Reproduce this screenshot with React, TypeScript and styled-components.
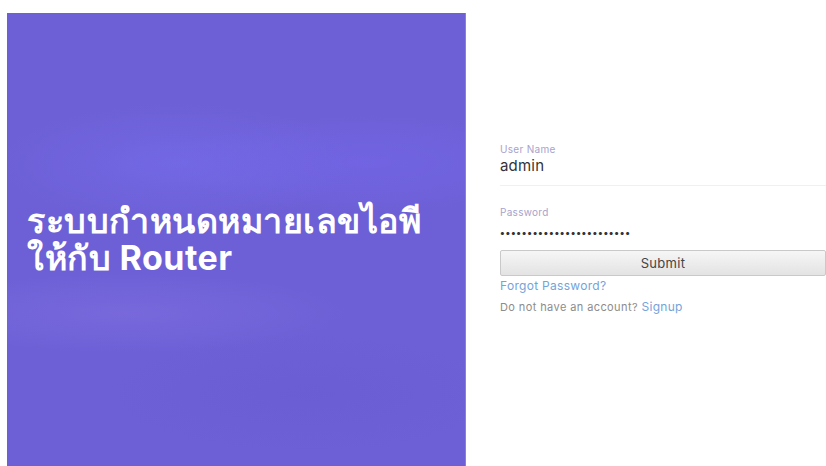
import React from 'react';
import styled, { createGlobalStyle } from 'styled-components';

const GlobalStyle = createGlobalStyle`
  html, body {
    margin: 0;
    padding: 0;
    background: #ffffff;
  }
  body {
    font-family: 'Inter', 'Noto Sans', 'DejaVu Sans', sans-serif;
  }
`;

const Page = styled.div`
  display: flex;
  width: 826px;
  height: 466px;
  padding: 13px 0 0 7px;
  box-sizing: border-box;
  overflow: hidden;
`;

const Hero = styled.section`
  flex: 0 0 459px;
  height: 453px;
  display: flex;
  align-items: center;
  padding-left: 20px;
  box-sizing: border-box;
  background:
    radial-gradient(ellipse 180px 60px at 170px 150px, rgba(120, 110, 240, 0.55), transparent),
    radial-gradient(ellipse 200px 50px at 360px 150px, rgba(118, 104, 238, 0.5), transparent),
    radial-gradient(ellipse 220px 40px at 120px 300px, rgba(130, 112, 226, 0.5), transparent),
    radial-gradient(ellipse 200px 60px at 300px 380px, rgba(104, 90, 208, 0.5), transparent),
    #6d60d6;
  border-right: 1px solid #8a80d8;
`;

const HeroTitle = styled.h1`
  margin: 0 0 2px;
  color: #ffffff;
  font-family: 'Inter', 'Noto Sans', sans-serif;
  font-size: 34px;
  font-weight: 700;
  line-height: 37px;
  letter-spacing: 0.5px;
`;

const FormSide = styled.section`
  flex: 1;
  display: flex;
  flex-direction: column;
  padding: 129px 0 0 34px;
  box-sizing: border-box;
`;

const Field = styled.div<{ $gap?: number }>`
  display: flex;
  flex-direction: column;
  border-bottom: 1px solid #f0f0f2;
  padding-bottom: 9px;
  margin-bottom: ${({ $gap }) => $gap ?? 19}px;
`;

const Label = styled.label`
  font-size: 10px;
  color: #a8a2cc;
  line-height: 14px;
  letter-spacing: 0.3px;
`;

const Value = styled.div<{ $secret?: boolean }>`
  font-size: ${({ $secret }) => ($secret ? '10px' : '15px')};
  color: #333338;
  line-height: ${({ $secret }) => ($secret ? '26px' : '20px')};
  letter-spacing: ${({ $secret }) => ($secret ? '0.7px' : '0.2px')};
  font-weight: ${({ $secret }) => ($secret ? 700 : 400)};
`;

const SubmitButton = styled.button`
  width: 326px;
  height: 26px;
  border: 1px solid #c9c9c9;
  border-radius: 2px;
  background: linear-gradient(#f6f6f6, #e3e3e3);
  color: #444;
  font-family: inherit;
  font-size: 13px;
  letter-spacing: 0.3px;
  cursor: pointer;
`;

const LinkText = styled.a<{ $size?: number }>`
  color: #74a3da;
  font-size: ${({ $size }) => $size ?? 12}px;
  letter-spacing: 0.3px;
  text-decoration: none;
`;

const ForgotRow = styled.div`
  margin-top: 0;
  line-height: 16px;
`;

const SignupRow = styled.div`
  margin-top: 4px;
  font-size: 11px;
  color: #8c8c8c;
  line-height: 18px;
  letter-spacing: 0.4px;
`;

export default function App() {
  return (
    <>
      <GlobalStyle />
      <Page>
        <Hero>
          <HeroTitle>
            ระบบกำหนดหมายเลขไอพี
            <br />
            ให้กับ Router
          </HeroTitle>
        </Hero>
        <FormSide>
          <Field>
            <Label>User Name</Label>
            <Value>admin</Value>
          </Field>
          <Field $gap={-5}>
            <Label>Password</Label>
            <Value $secret>{'•'.repeat(24)}</Value>
          </Field>
          <SubmitButton type="button">Submit</SubmitButton>
          <ForgotRow>
            <LinkText href="#">Forgot Password?</LinkText>
          </ForgotRow>
          <SignupRow>
            Do not have an account? <LinkText href="#" $size={12}>Signup</LinkText>
          </SignupRow>
        </FormSide>
      </Page>
    </>
  );
}
